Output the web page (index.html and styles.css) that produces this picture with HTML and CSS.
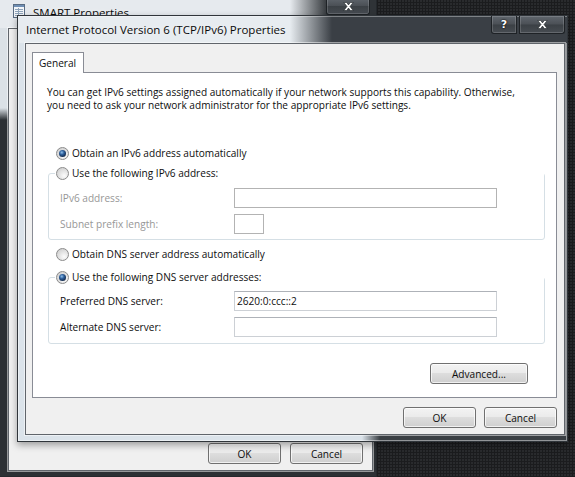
FILE: index.html
```html
<!DOCTYPE html>
<html lang="en">
<head>
<meta charset="utf-8">
<title>Internet Protocol Version 6 (TCP/IPv6) Properties</title>
<link rel="stylesheet" href="styles.css">
</head>
<body>

<!-- Parent property sheet, behind the dialog -->
<div class="window window-back">
  <div class="titlebar">
    <svg class="app-icon" width="12" height="14" viewBox="0 0 12 14" aria-hidden="true">
      <rect x="0.5" y="0.5" width="11" height="13" fill="#f3f6f9" stroke="#5a6d84"/>
      <rect x="1" y="1" width="10" height="2" fill="#6f8fb4"/>
      <path d="M2 5.5h8M2 7.5h8M2 9.5h8M2 11.5h8M5.5 4v9" stroke="#8fa4ba" stroke-width="1"/>
    </svg>
    <span class="title">SMART Properties</span>
    <div class="caption-buttons">
      <button class="cap-btn cap-close cap-close-back" aria-label="Close">
        <svg width="11" height="9" viewBox="0 0 11 9" aria-hidden="true"><path d="M0.8 0.5h2.9l1.8 2.4 1.8-2.4h2.9L7 4.5l3.2 4H7.3L5.5 6.1 3.7 8.5H0.8L4 4.5z" fill="#fff" stroke="#1d2125" stroke-width="0.6"/></svg>
      </button>
    </div>
  </div>
  <div class="client client-back">
    <div class="actions actions-back">
      <button class="btn">OK</button>
      <button class="btn">Cancel</button>
    </div>
  </div>
</div>

<!-- IPv6 properties dialog -->
<div class="window window-front">
  <div class="titlebar">
    <span class="title title-front">Internet Protocol Version 6 (TCP/IPv6) Properties</span>
    <div class="caption-buttons">
      <button class="cap-btn cap-help" aria-label="Help"><span class="cap-glyph">?</span></button>
      <button class="cap-btn cap-close" aria-label="Close">
        <svg width="11" height="9" viewBox="0 0 11 9" aria-hidden="true"><path d="M0.8 0.5h2.9l1.8 2.4 1.8-2.4h2.9L7 4.5l3.2 4H7.3L5.5 6.1 3.7 8.5H0.8L4 4.5z" fill="#fff" stroke="#1d2125" stroke-width="0.6"/></svg>
      </button>
    </div>
  </div>

  <div class="client client-front">
    <div class="tabs">
      <div class="tab">General</div>
    </div>

    <div class="tab-panel">
      <p class="intro">You can get IPv6 settings assigned automatically if your network supports this capability. Otherwise,<br>you need to ask your network administrator for the appropriate IPv6 settings.</p>

      <label class="radio-row opt-auto-ip"><span class="radio checked"></span>Obtain an IPv6 address automatically</label>

      <div class="group group-ip" role="group">
        <label class="radio-row legend"><span class="radio"></span>Use the following IPv6 address:</label>
        <div class="rows rows-ip">
          <div class="field-row"><span class="field-label disabled">IPv6 address:</span><input class="field" type="text" disabled></div>
          <div class="field-row"><span class="field-label disabled">Subnet prefix length:</span><input class="field field-short" type="text" disabled></div>
        </div>
      </div>

      <label class="radio-row opt-auto-dns"><span class="radio"></span>Obtain DNS server address automatically</label>

      <div class="group group-dns" role="group">
        <label class="radio-row legend"><span class="radio checked"></span>Use the following DNS server addresses:</label>
        <div class="rows rows-dns">
          <div class="field-row"><span class="field-label">Preferred DNS server:</span><input class="field" type="text" value="2620:0:ccc::2"></div>
          <div class="field-row"><span class="field-label">Alternate DNS server:</span><input class="field" type="text"></div>
        </div>
      </div>

      <div class="advanced-row">
        <button class="btn btn-wide">Advanced...</button>
      </div>
    </div>

    <div class="actions actions-front">
      <button class="btn">OK</button>
      <button class="btn">Cancel</button>
    </div>
  </div>
</div>

</body>
</html>
```

FILE: styles.css
```css
* {
  box-sizing: border-box;
}

html,
body {
  margin: 0;
  padding: 0;
}

/* Dark desktop with a fine dot texture */
body {
  position: relative;
  width: 575px;
  height: 477px;
  overflow: hidden;
  background-color: #1b1c1e;
  background-image: radial-gradient(circle at 1px 1px, #2d2f32 0.6px, transparent 1.1px);
  background-size: 3px 3px;
  font-family: "Open Sans", "Noto Sans", sans-serif;
  font-size: 10.1px;
  color: #0e0e0e;
}

button {
  font: inherit;
  color: inherit;
  cursor: default;
}

/* ---------- Glass windows ---------- */

.window {
  position: absolute;
  display: flex;
  flex-direction: column;
  border: 1px solid #24282c;
}

.window-back {
  left: -1px;
  top: -3px;
  width: 378px;
  height: 480px;
  background:
    linear-gradient(to bottom, #dbe1e6 0, #dbe1e6 110px, rgba(219, 225, 230, 0) 122px) 0 0 / 9px 100% no-repeat,
    #2c3034;
}

.window-front {
  left: 17px;
  top: 15px;
  width: 551px;
  height: 427px;
  border-color: #30353a;
  background: linear-gradient(to right, #dbe3ea 0, #dbe3ea 344px, #3a3f44 362px);
  box-shadow: inset 0 0 0 1px rgba(255, 255, 255, 0.45), 0 3px 7px rgba(0, 0, 0, 0.35);
}

.titlebar {
  display: flex;
  align-items: flex-start;
  flex: none;
}

.window-back .titlebar {
  height: 30px;
  padding-left: 13px;
  background: linear-gradient(to right, #e6eaee 0, #e6eaee 290px, #2f3337 328px);
}

.window-front .titlebar {
  height: 27px;
  padding-left: 8px;
  background: linear-gradient(to right, #e7ecf0 0, #e7ecf0 272px, #3a3f45 314px);
  box-shadow: inset 0 1px 0 rgba(255, 255, 255, 0.35);
}

.app-icon {
  margin-top: 6px;
  flex: none;
}

.title {
  font-size: 11.5px;
  line-height: 14px;
  color: #0a0a0a;
  white-space: nowrap;
  text-shadow: 0 0 6px rgba(255, 255, 255, 0.7);
}

.window-back .title {
  margin: 8px 0 0 8px;
}

.title-front {
  margin-top: 7px;
}

.caption-buttons {
  display: flex;
  gap: 2px;
  margin-left: auto;
}

.window-back .caption-buttons {
  margin-right: 6px;
}

.window-front .caption-buttons {
  margin-right: 2px;
}

.cap-btn {
  display: flex;
  align-items: center;
  justify-content: center;
  height: 18px;
  padding: 0;
  border: 1px solid #1e2226;
  border-top: none;
  background: linear-gradient(#60666d 0, #4b5056 48%, #3b4045 52%, #474c52 100%);
  box-shadow: inset 0 0 0 1px rgba(255, 255, 255, 0.16);
  color: #fff;
}

.cap-help {
  width: 26px;
  border-radius: 0 0 0 3px;
}

.cap-close {
  width: 46px;
  border-radius: 0 0 3px 0;
}

.cap-close-back {
  width: 44px;
  height: 17px;
  border-radius: 0 0 3px 3px;
}

.cap-glyph {
  font-family: "DejaVu Sans", sans-serif;
  font-weight: bold;
  font-size: 11px;
  line-height: 11px;
  text-shadow: 0 0 2px #000, 0 0 1px #000;
}

/* ---------- Client areas ---------- */

.client {
  flex: 1;
  display: flex;
  flex-direction: column;
  background: #f0f0f0;
  border: 1px solid #60656b;
  box-shadow: 0 0 0 1px rgba(255, 255, 255, 0.5);
}

.client-back {
  margin: 0 3px 5px 8px;
  justify-content: flex-end;
}

.client-front {
  margin: 0 2px 6px 7px;
  padding: 8px 7px 0 6px;
}

.actions {
  display: flex;
  justify-content: flex-end;
}

.actions-back {
  gap: 9px;
  padding: 0 9px 6px 0;
}

.actions-front {
  gap: 8px;
  margin-top: 9px;
}

/* ---------- Tab control ---------- */

.tabs {
  display: flex;
  position: relative;
  z-index: 1;
  margin-bottom: -1px;
}

.tab {
  width: 52px;
  height: 21px;
  padding-left: 6px;
  line-height: 20px;
  background: #fff;
  border: 1px solid #898c95;
  border-bottom: none;
}

.tab-panel {
  height: 326px;
  background: #fff;
  border: 1px solid #898c95;
  display: flex;
  flex-direction: column;
}

.intro {
  margin: 13px 0 0 14px;
  line-height: 13px;
  white-space: nowrap;
}

/* ---------- Radio buttons ---------- */

.radio-row {
  display: flex;
  align-items: center;
  gap: 3px;
  height: 13px;
  line-height: 13px;
  white-space: nowrap;
}

.radio {
  flex: none;
  display: flex;
  align-items: center;
  justify-content: center;
  width: 13px;
  height: 13px;
  border-radius: 50%;
  border: 1px solid #8b8b8b;
  background: radial-gradient(circle at 65% 70%, #fcfcfc 0, #e4e4e4 45%, #c6c6c6 100%);
}

.radio.checked::after {
  content: "";
  width: 7px;
  height: 7px;
  border-radius: 50%;
  background: radial-gradient(circle at 40% 35%, #8fc0ea 0, #2d5f9c 35%, #10223f 80%);
}

.opt-auto-ip {
  margin: 35px 0 0 23px;
}

.opt-auto-dns {
  margin: 8px 0 0 23px;
}

/* ---------- Group boxes ---------- */

.group {
  margin: 0 11px 0 15px;
  border: 1px solid #d5dfe5;
  border-radius: 3px;
}

.group-ip {
  margin-top: 13px;
  padding-bottom: 5px;
}

.group-dns {
  margin-top: 16px;
  padding-bottom: 6px;
}

.legend {
  align-self: flex-start;
  margin: -7px 0 0 6px;
  padding: 0 3px 0 1px;
  background: #fff;
}

.rows {
  display: flex;
  flex-direction: column;
  gap: 6px;
  padding-left: 11px;
}

.rows-ip {
  padding-top: 8px;
}

.rows-dns {
  padding-top: 7px;
}

.field-row {
  display: flex;
  align-items: center;
  height: 20px;
}

.field-label {
  width: 174px;
  flex: none;
}

.field-label.disabled {
  color: #979797;
}

.field {
  width: 263px;
  height: 20px;
  margin: 0;
  padding: 0 2px;
  font: inherit;
  color: #0e0e0e;
  background: #fff;
  border: 1px solid #ccd0d5;
  border-top-color: #aeb2b8;
  border-radius: 0;
  outline: none;
}

.field:disabled {
  border-color: #b3b3b3;
  background: #fff;
}

.field-short {
  width: 30px;
}

.advanced-row {
  display: flex;
  justify-content: flex-end;
  margin-top: 19px;
  padding-right: 28px;
}

/* ---------- Push buttons ---------- */

.btn {
  width: 73px;
  height: 21px;
  padding: 0;
  border: 1px solid #707070;
  border-radius: 3px;
  background: linear-gradient(#f3f3f3 0, #ebebeb 45%, #dddddd 50%, #cfcfcf 100%);
  box-shadow: inset 0 0 0 1px rgba(255, 255, 255, 0.7);
  color: #0e0e0e;
}

.btn-wide {
  width: 98px;
}
```
